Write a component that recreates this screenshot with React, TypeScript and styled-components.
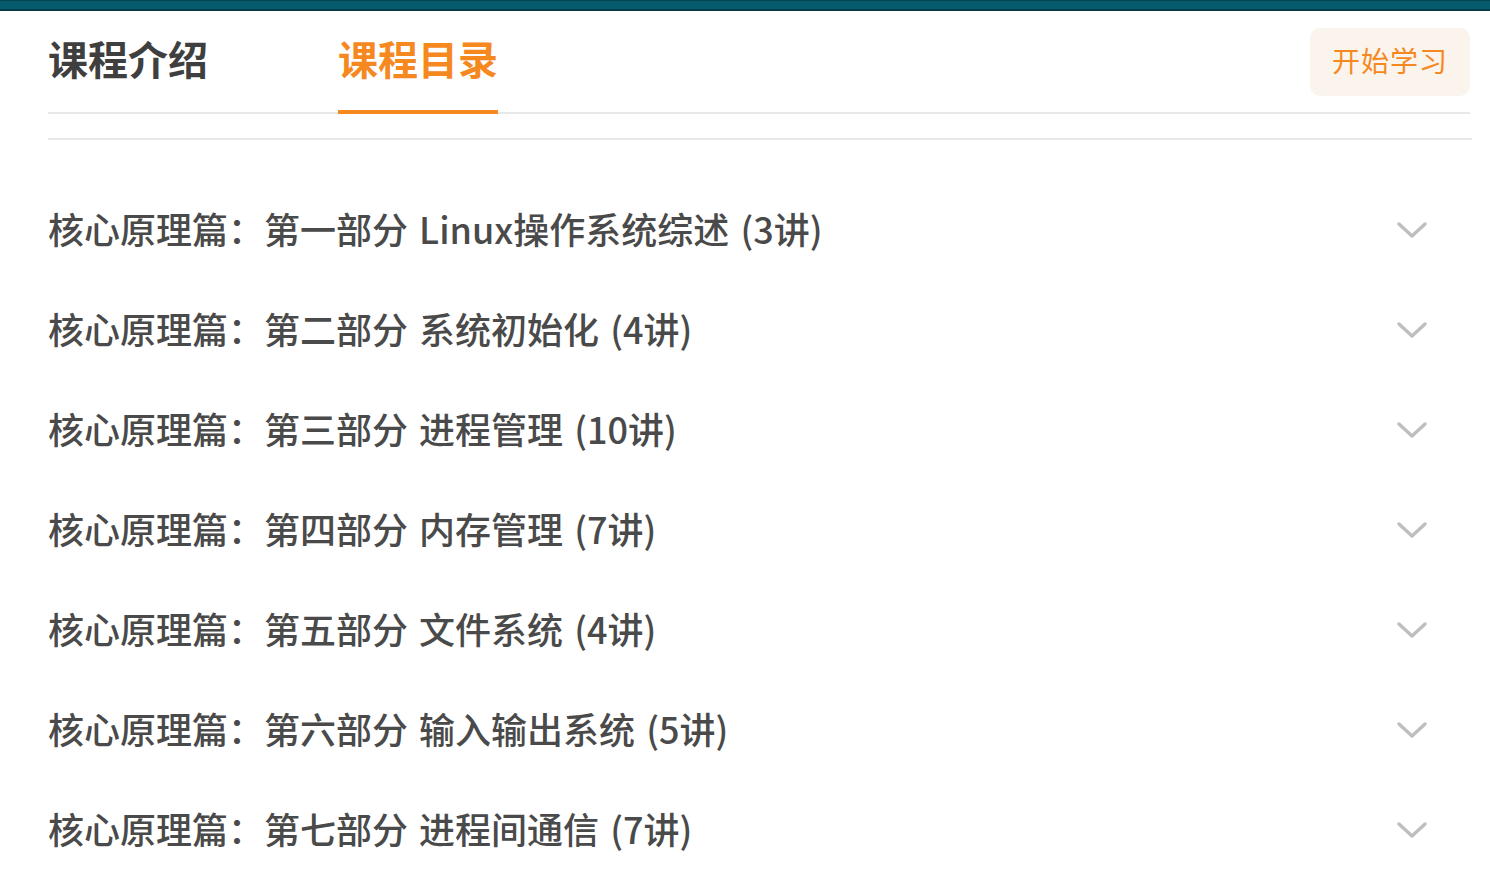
import React from "react";
import styled, { createGlobalStyle } from "styled-components";

const GlobalStyle = createGlobalStyle`
  html, body {
    margin: 0;
    padding: 0;
    background: #ffffff;
  }
  body {
    font-family: "Noto Sans CJK SC", "Noto Sans", sans-serif;
  }
  * { box-sizing: border-box; }
`;

const ORANGE = "#f5891f";

const TopBar = styled.div`
  height: 11px;
  background: #055b6b;
  border-top: 1px solid #044552;
  border-bottom: 2px solid #033b46;
`;

const Container = styled.div`
  padding: 0 20px 0 48px;
`;

const Header = styled.div`
  display: flex;
  align-items: flex-start;
  border-bottom: 2px solid #e8e8e8;
  height: 103px;
`;

const Tabs = styled.div`
  display: flex;
  gap: 130px;
`;

const Tab = styled.div<{ $active?: boolean }>`
  font-size: 40px;
  line-height: 40px;
  height: 103px;
  padding-top: 27px;
  font-weight: 700;
  color: ${(p) => (p.$active ? ORANGE : "#3f3f3f")};
  border-bottom: 4px solid ${(p) => (p.$active ? ORANGE : "transparent")};
  width: 160px;
  white-space: nowrap;
  cursor: pointer;
`;

const StartButton = styled.button`
  margin-left: auto;
  margin-top: 17px;
  width: 160px;
  height: 68px;
  border: none;
  border-radius: 10px;
  background: #faf4ed;
  color: ${ORANGE};
  font-family: "Noto Sans CJK SC", sans-serif;
  font-size: 28px;
  line-height: 1;
  letter-spacing: 1px;
  padding: 0 0 4px 0;
  cursor: pointer;
`;

const Divider = styled.div`
  margin-top: 24px;
  height: 2px;
  background: #e8e8e8;
  margin-right: -2px;
`;

const List = styled.div`
  padding-top: 40px;
`;

const Row = styled.div`
  height: 100px;
  display: flex;
  align-items: center;
  justify-content: space-between;
  padding-right: 42px;
  cursor: pointer;
`;

const RowTitle = styled.div`
  font-family: "Noto Sans CJK SC", sans-serif;
  font-size: 36px;
  line-height: 1;
  font-weight: 500;
  color: #4a4a4a;
  white-space: nowrap;
  word-spacing: 3px;
  margin-top: -4px;
`;

const Chevron = () => (
  <svg width="32" height="18" viewBox="0 0 32 18" fill="none">
    <polyline
      points="3,3 16,15 29,3"
      stroke="#bfbfbf"
      strokeWidth="3.5"
      strokeLinecap="round"
      strokeLinejoin="round"
    />
  </svg>
);

const chapters = [
  "核心原理篇：第一部分 Linux操作系统综述 (3讲)",
  "核心原理篇：第二部分 系统初始化 (4讲)",
  "核心原理篇：第三部分 进程管理 (10讲)",
  "核心原理篇：第四部分 内存管理 (7讲)",
  "核心原理篇：第五部分 文件系统 (4讲)",
  "核心原理篇：第六部分 输入输出系统 (5讲)",
  "核心原理篇：第七部分 进程间通信 (7讲)",
];

export default function App() {
  return (
    <>
      <GlobalStyle />
      <TopBar />
      <Container>
        <Header>
          <Tabs>
            <Tab>课程介绍</Tab>
            <Tab $active>课程目录</Tab>
          </Tabs>
          <StartButton>开始学习</StartButton>
        </Header>
        <Divider />
        <List>
          {chapters.map((c) => (
            <Row key={c}>
              <RowTitle>{c}</RowTitle>
              <Chevron />
            </Row>
          ))}
        </List>
      </Container>
    </>
  );
}
